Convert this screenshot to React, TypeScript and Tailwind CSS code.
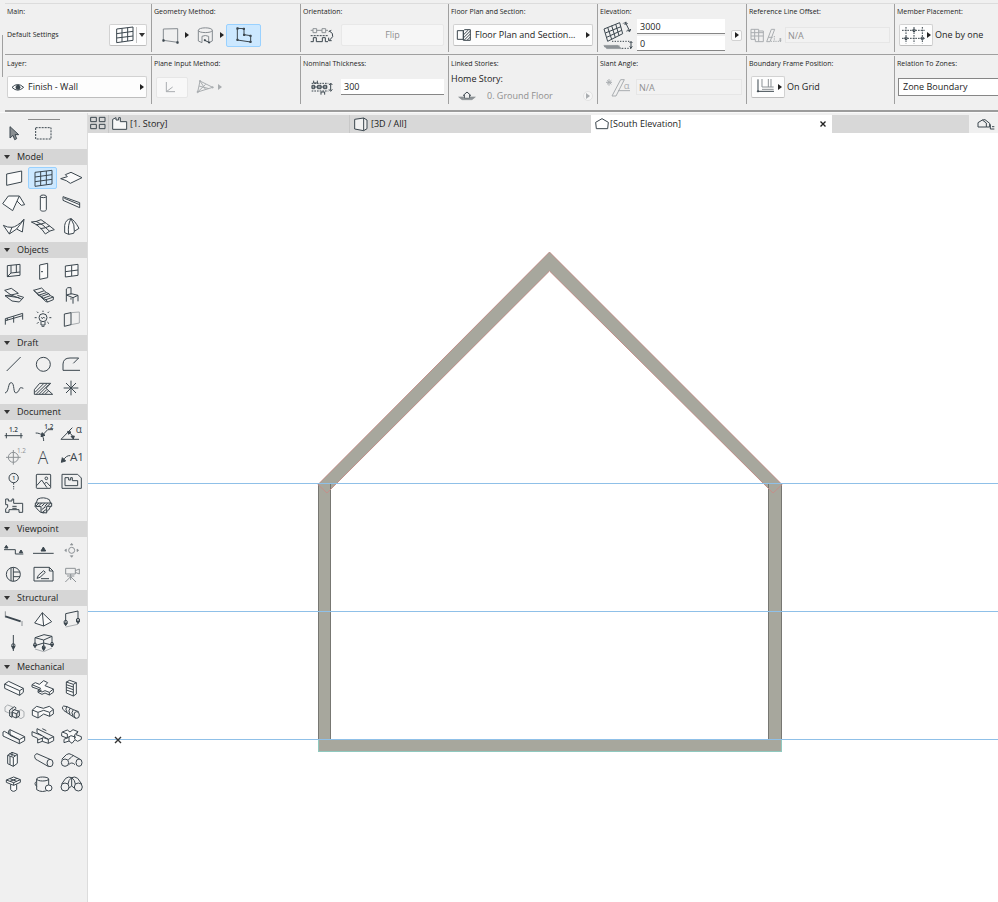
import type { ReactNode } from "react";
import clsx from "clsx";

const INK = "#3b464e";
const FAINT = "#a9adb0";

type GlyphProps = {
  box?: string;
  className?: string;
  color?: string;
  children: ReactNode;
};

// Icons are drawn on a grid three times finer than their size on screen.
function Glyph({ box = "0 0 72 60", className = "w-6 h-5", color = INK, children }: GlyphProps) {
  return (
    <svg
      viewBox={box}
      className={clsx("block shrink-0 overflow-visible", className)}
      fill="none"
      stroke={color}
      strokeWidth={3}
      strokeLinejoin="round"
      aria-hidden="true"
      fontFamily="Open Sans, sans-serif"
    >
      {children}
    </svg>
  );
}

function P({ d, c, w, fill }: { d: string; c?: string; w?: number; fill?: string }) {
  return <path d={d} stroke={c} strokeWidth={w} fill={fill} />;
}

type TxtProps = { x: number; y: number; size: number; c?: string; weight?: number; children: string };

function Txt({ x, y, size, c = INK, weight = 400, children }: TxtProps) {
  return (
    <text x={x} y={y} fontSize={size} fontWeight={weight} fill={c} stroke="none">
      {children}
    </text>
  );
}

function Caret({ color = "#222" }: { color?: string }) {
  return (
    <svg viewBox="0 0 4 6" className="block h-1.5 w-1 shrink-0" aria-hidden="true">
      <path d="M0 0L4 3L0 6Z" fill={color} />
    </svg>
  );
}

type Tool = { name: string; icon: ReactNode; color?: string; active?: boolean };

const sections: { title: string; tools: Tool[] }[] = [
  {
    title: "Model",
    tools: [
      { name: "Wall", icon: <P d="M14 18L59 9V42L14 52Z" fill="#fafafa" /> },
      {
        name: "Curtain Wall",
        active: true,
        icon: <P d="M12 13L63 7V48L12 55ZM29 11V53M46 9V50M12 27L63 20M12 41L63 34" />,
      },
      { name: "Slab", icon: <P d="M5 32L25 26L19 20L36 13L69 29L34 46L22 38Z" fill="#fafafa" /> },
      { name: "Roof", icon: <P d="M2 35L19 12H52L32 56ZM52 12L68 38L58 40L45 27" fill="#fafafa" /> },
      {
        name: "Column",
        icon: (
          <>
            <P d="M28 13V53C28 59 46 59 46 53V13" fill="#fafafa" />
            <ellipse cx="37" cy="13" rx="9" ry="4" />
          </>
        ),
      },
      { name: "Beam", icon: <P d="M12 14L62 32V47L12 25ZM16 19L62 38" fill="#fafafa" /> },
      { name: "Shell", icon: <P d="M4 28L22 54L44 39L61 48L66 10Q44 33 30 34T4 28M66 10L44 39M22 54L30 34" fill="#fafafa" /> },
      {
        name: "Mesh",
        icon: <P d="M1 18Q16 18 30 11Q44 20 70 41Q56 43 43 54Q26 28 1 18ZM15 16Q36 24 56 46M14 26Q30 26 43 20M28 38Q42 37 56 30" />,
      },
      {
        name: "Morph",
        icon: <P d="M17 50V28Q20 10 36 8Q46 12 60 37L46 46L44 52L29 55ZM36 8Q25 27 29 55M36 8Q48 26 46 46" fill="#fafafa" />,
      },
    ],
  },
  {
    title: "Objects",
    tools: [
      { name: "Window", icon: <P d="M16 14L54 10V43L16 47ZM27 13V36L54 33M16 47L27 36M43 12V34" /> },
      { name: "Door", icon: <P d="M26 12L50 7V50L26 55ZM30 32H36" fill="#fafafa" /> },
      { name: "Skylight", icon: <P d="M19 15L57 10V43L19 48ZM38 13V45M19 32L57 27" fill="#fafafa" /> },
      { name: "Ramp", icon: <P d="M8 16L28 10L49 25L27 30ZM27 30L9 32L30 48L52 51L65 37L46 31M27 30L60 43M9 32L52 38" /> },
      {
        name: "Stair",
        icon: <P d="M8 16L32 9L40 17L18 25ZM18 25L22 31L46 23L40 17M22 31L32 34L54 26L46 23M32 34L36 40L58 32L54 26M36 40L45 44L67 36L58 32M45 44L50 51L67 44V36M8 16L45 50L50 51" />,
      },
      { name: "Object", icon: <P d="M22 30V12Q24 6 36 8V29M22 30L37 26L57 31L42 38ZM22 30V50M42 38V56M57 31V49M36 38V44" /> },
      { name: "Railing", icon: <P d="M10 29L62 13V32M10 35L62 20M10 29V47M35 22V41M16 27V34" /> },
      {
        name: "Lamp",
        icon: (
          <>
            <circle cx="36" cy="26" r="12" />
            <P d="M30 38V48H42V38M32 52H40M31 25L34 29L38 24L41 28M36 5V9M18 8L22 12M54 8L50 12M11 26H17M55 26H61M18 44L23 39M54 44L49 39" />
          </>
        ),
      },
      {
        name: "Opening",
        icon: (
          <>
            <P d="M36 11L61 9V42L36 47" c={FAINT} />
            <P d="M16 15L36 11V47L16 52Z" />
          </>
        ),
      },
    ],
  },
  {
    title: "Draft",
    tools: [
      { name: "Line", icon: <P d="M14 51L56 9" /> },
      { name: "Circle", icon: <circle cx="37" cy="31" r="21" /> },
      { name: "Polyline", icon: <P d="M63 49H12V30Q13 12 33 12H59L43 28" /> },
      { name: "Spline", icon: <P d="M9 45C22 42 17 13 28 14S32 50 44 44S48 24 64 31" /> },
      {
        name: "Fill",
        icon: (
          <>
            <P d="M10 49V35L26 16H59L45 31L65 49Z" />
            <P d="M12 43L38 17M16 48L48 17M25 48L54 19M34 48L47 35M43 48L52 39" />
          </>
        ),
      },
      { name: "Hotspot", icon: <P d="M36 8V52M14 30H58M21 15L51 45M51 15L21 45" /> },
    ],
  },
  {
    title: "Document",
    tools: [
      {
        name: "Dimension",
        icon: (
          <>
            <P d="M8 38H62M13 30V46M57 30V46" />
            <Txt x={21} y={27} size={19} weight={600}>1.2</Txt>
          </>
        ),
      },
      {
        name: "Level Dimension",
        icon: (
          <>
            <P d="M14 30C30 30 38 38 38 54M34 37L50 20H66" />
            <P d="M30 41L33 29L42 37Z" fill={INK} />
            <Txt x={40} y={17} size={19} weight={600}>1.2</Txt>
          </>
        ),
      },
      {
        name: "Angle Dimension",
        icon: (
          <>
            <P d="M6 49H60M6 49L40 14M28 27Q41 34 43 46" />
            <P d="M26 25L36 27L29 34ZM43 48L36 40L46 39Z" fill={INK} />
            <Txt x={50} y={30} size={30}>α</Txt>
          </>
        ),
      },
      {
        name: "Elevation Dimension",
        color: "#8d9296",
        icon: (
          <>
            <circle cx="34" cy="31" r="15" />
            <P d="M12 31H56M34 9V53" />
            <Txt x={45} y={17} size={19} c="#8d9296">1.2</Txt>
          </>
        ),
      },
      { name: "Text", icon: <Txt x={20} y={50} size={52} weight={300}>A</Txt> },
      {
        name: "Label",
        icon: (
          <>
            <P d="M34 26Q22 24 12 41" />
            <P d="M7 46L10 32L20 42Z" fill={INK} />
            <Txt x={33} y={43} size={35}>A1</Txt>
          </>
        ),
      },
      {
        name: "Grid Element",
        icon: (
          <>
            <circle cx="35" cy="21" r="14" />
            <P d="M35 35V41M35 45V49M35 52V55" />
            <Txt x={30} y={28} size={18} weight={600}>1</Txt>
          </>
        ),
      },
      {
        name: "Figure",
        icon: (
          <>
            <rect x="16" y="10" width="43" height="42" rx="2" />
            <circle cx="46" cy="22" r="4" />
            <P d="M17 44L32 27L48 50M40 39L46 33L58 46" />
          </>
        ),
      },
      { name: "Drawing", icon: <P d="M9 10H56L67 21V52H9ZM18 20H29V27H35V20H40V29H56V44H18Z" /> },
      { name: "Zone", icon: <P d="M11 12H19V18H30V12H35V25H62V52H51V44H21V52H11V42L17 36V29H11ZM31 34H44M31 40H44" /> },
      {
        name: "Detail",
        icon: (
          <>
            <P d="M20 12Q38 4 55 14L61 30L53 45Q36 62 22 46L12 34Z" />
            <P d="M13 34V24H62V34H47V54L30 52V35Z" fill="#e8e8e8" />
            <P d="M15 33L24 24M23 33L32 24M32 34L41 25M41 34L50 25M50 33L59 24M32 44L44 35M34 52L46 43" />
          </>
        ),
      },
    ],
  },
  {
    title: "Viewpoint",
    tools: [
      {
        name: "Section",
        icon: (
          <>
            <P d="M6 29H40V42H64" />
            <P d="M8 24L13 16L18 24ZM52 38L57 30L62 38Z" fill={INK} />
          </>
        ),
      },
      {
        name: "Elevation",
        icon: (
          <>
            <P d="M6 40H68" />
            <P d="M30 33L37 21L44 33Z" fill={INK} />
          </>
        ),
      },
      {
        name: "Interior Elevation",
        color: "#8d9296",
        icon: (
          <>
            <circle cx="38" cy="31" r="9" />
            <P d="M38 10L42 15H34ZM38 52L42 47H34ZM17 31L22 27V35ZM59 31L54 27V35Z" fill="#8d9296" w={2} />
          </>
        ),
      },
      {
        name: "Worksheet",
        icon: (
          <>
            <circle cx="34" cy="31" r="21" />
            <P d="M27 11V51M34 10V52M34 24H54M34 38H54" />
          </>
        ),
      },
      { name: "Change", icon: <P d="M9 10H55L66 21V51H9ZM55 10V21H66M18 43L22 34L38 20L43 25L27 40ZM30 44H54" /> },
      {
        name: "Camera",
        color: "#8d9296",
        icon: <P d="M20 13H49V30H20ZM49 20L61 15V30L49 25M35 30V38M35 38L19 54M35 38L51 54M35 38V48M24 36H46" />,
      },
    ],
  },
  {
    title: "Structural",
    tools: [
      {
        name: "Edge Support",
        icon: (
          <>
            <P d="M10 7V25M60 36V51" c="#8d9296" />
            <P d="M10 22L56 37" w={6} />
          </>
        ),
      },
      { name: "Surface Support", icon: <P d="M34 11L11 42L38 51L62 38ZM34 11L38 51" fill="#fafafa" /> },
      {
        name: "Edge Load",
        icon: (
          <>
            <P d="M20 38V14L57 6V32" />
            <P d="M20 54L57 46" c={FAINT} />
            <circle cx="20" cy="39" r="5" />
            <circle cx="57" cy="33" r="5" />
            <P d="M15 42H25L20 50ZM52 36H62L57 44Z" fill={INK} />
          </>
        ),
      },
      {
        name: "Point Load",
        icon: (
          <>
            <P d="M34 6V54" />
            <circle cx="34" cy="37" r="5" />
            <P d="M29 40H39L34 49Z" fill={INK} />
          </>
        ),
      },
      {
        name: "Surface Load",
        icon: (
          <>
            <P d="M12 14L39 5L63 10L38 21ZM12 14V33M38 21V42M63 10V32M12 38L38 30L63 36" />
            <P d="M12 48L38 56L63 45" c={FAINT} />
            <circle cx="12" cy="34" r="4" />
            <circle cx="38" cy="42" r="4" />
            <circle cx="63" cy="32" r="4" />
            <P d="M7 36H17L12 44ZM33 44H43L38 53ZM58 34H68L63 42Z" fill={INK} />
          </>
        ),
      },
    ],
  },
  {
    title: "Mechanical",
    tools: [
      { name: "Duct", icon: <P d="M8 18L20 10L64 31V43L53 52L8 31ZM8 18L53 38V52M53 38L64 31" fill="#fafafa" /> },
      {
        name: "Duct Junction",
        icon: <P d="M3 20L13 14L25 19L38 8L50 14L42 23L67 33V43L55 51L42 45L33 49L21 43L31 37L3 27ZM3 20L29 31L21 37V43M21 37L33 42L42 38L55 43V51M55 43L67 33" fill="#fafafa" />,
      },
      { name: "Air Terminal", icon: <P d="M22 12L32 7L52 14V48L43 54L22 45ZM22 12L43 19V54M43 19L52 14M22 20L43 27M22 28L43 35M22 36L43 43" fill="#fafafa" /> },
      {
        name: "Equipment",
        icon: (
          <>
            <P d="M9 15L17 9L31 14V29L23 34L9 28ZM47 27L57 23L66 29V44L57 50L46 44Z" c={FAINT} />
            <P d="M23 42V24L37 14L42 18M23 42L30 46V29L43 19M35 22L52 28V42L42 48L31 43V31L43 35V48M43 35L52 28" />
          </>
        ),
      },
      { name: "Bend", icon: <P d="M4 24L17 13L37 19L55 13L67 22V36L56 43L38 36L21 48L4 40ZM4 24L21 31V48M21 31L38 25L56 31V43M56 31L67 22" fill="#fafafa" /> },
      {
        name: "Flexible Duct",
        icon: (
          <>
            <P d="M14 12Q6 16 15 26L50 49M14 12L24 14L43 23L59 29M24 14Q17 20 24 31M34 18Q26 25 33 37M43 23Q35 31 42 43" />
            <ellipse cx="53" cy="39" rx="8" ry="10" />
          </>
        ),
      },
      { name: "Cable Carrier", icon: <P d="M3 18V30L52 53L68 44V32L52 41L24 28M3 18L7 16L52 41V53M24 28V11L68 32M24 11L20 14V25" fill="#fafafa" /> },
      { name: "Cable Junction", icon: <P d="M3 17V29L20 37V51L34 46L52 52L68 44V32L52 40L38 35L20 42M3 17L33 29M18 8V20L52 40V52M18 8L68 32M34 8L46 14M34 35V46" fill="#fafafa" /> },
      { name: "Cable Cross", icon: <P d="M10 18L25 12L33 18L42 11L57 17L51 26L67 32V40L56 46L48 41L39 52L30 45L15 50V40L24 36L8 30V22ZM10 18L25 24V37M57 17L47 26V40M24 36L36 29L51 34M30 45V32" fill="#fafafa" /> },
      { name: "Inline Fitting", icon: <P d="M17 16L30 7L46 13V40L34 49L17 41ZM17 16L34 22V49M34 22L46 13M24 19V44M30 7V18M22 11L40 17" fill="#fafafa" /> },
      {
        name: "Pipe",
        icon: (
          <>
            <P d="M18 11Q8 14 12 24Q13 29 20 31L53 50M18 11L57 28" />
            <ellipse cx="57" cy="39" rx="9" ry="11" />
          </>
        ),
      },
      {
        name: "Pipe Junction",
        icon: (
          <>
            <P d="M8 28L22 14Q30 8 38 14L62 27M29 44Q38 34 48 44M28 29Q38 22 44 15" />
            <circle cx="18" cy="38" r="11" />
            <ellipse cx="60" cy="38" rx="9" ry="11" />
          </>
        ),
      },
      {
        name: "Pipe Terminal",
        icon: <P d="M13 18L35 9L55 17V25L35 34L13 25ZM13 18L35 26L55 17M35 26V34M26 31V47Q34 57 44 47V31M24 14L44 22M24 22L46 13" fill="#fafafa" />,
      },
      {
        name: "Tank",
        icon: (
          <>
            <P d="M17 15V47Q34 58 53 47V15M17 22Q7 28 17 37" />
            <ellipse cx="35" cy="15" rx="18" ry="6" />
            <ellipse cx="53" cy="42" rx="10" ry="9" fill="#fafafa" />
          </>
        ),
      },
      {
        name: "Pipe Bend",
        icon: (
          <>
            <P d="M8 30L20 13Q29 6 38 11Q47 6 56 13L68 30M38 11V36M29 43L38 36L47 43M27 30Q28 18 38 11Q48 18 49 30" />
            <circle cx="18" cy="39" r="12" />
            <circle cx="58" cy="39" r="12" />
          </>
        ),
      },
    ],
  },
];

function Toolbox() {
  return (
    <aside aria-label="Toolbox" className="w-[88px] shrink-0 border-r border-[#dcdcdc] bg-[#f0f0f0]">
      <div className="flex flex-col items-center pt-1.5">
        <div className="h-px w-8 bg-[#8c8c8c]" />
      </div>
      <div className="mb-[3px] grid h-[26px] grid-cols-[28px_29px_28px] place-items-center">
        <button aria-label="Arrow">
          <Glyph>
            <P d="M24 11V45L33 37L38 50L44 47L39 35H50Z" fill="#8a8f92" />
          </Glyph>
        </button>
        <button aria-label="Marquee">
          <Glyph>
            <rect x="14" y="14" width="46" height="34" strokeDasharray="6 3" />
          </Glyph>
        </button>
      </div>
      {sections.map((section) => (
        <section key={section.title}>
          <h2>
            <button className="flex h-4 w-full items-center bg-[#d6d6d6] pl-1 text-[9px] leading-4 font-medium">
              <svg viewBox="0 0 6 4" className="mr-[7px] h-1 w-1.5" aria-hidden="true">
                <path d="M0 0H6L3 4Z" fill="#333" />
              </svg>
              {section.title}
            </button>
          </h2>
          <div className="grid grid-cols-[28px_29px_28px] pt-px pb-1">
            {section.tools.map((tool) => (
              <button
                key={tool.name}
                aria-label={tool.name}
                className={clsx(
                  "my-px flex h-[22px] items-center justify-center rounded-xs border",
                  tool.active ? "border-[#99d1ff] bg-[#cce8ff]" : "border-transparent",
                )}
              >
                <Glyph color={tool.color}>{tool.icon}</Glyph>
              </button>
            ))}
          </div>
        </section>
      ))}
    </aside>
  );
}

const raised = "flex items-center rounded-xs border border-[#d2d2d2] border-b-[#bdbdbd] bg-[#fdfdfd]";
const field = "h-4 min-w-0 border-b border-[#868686] bg-white px-[3px] text-[9px]";
const disabledField = "h-4 min-w-0 border border-[#e6e6e6] bg-[#f2f2f2] px-0.5 text-[9px] text-[#8f8f8f]";

function Cell({ label, htmlFor, first, children }: { label: string; htmlFor?: string; first?: boolean; children: ReactNode }) {
  return (
    <div className={clsx("flex h-12 min-w-0 flex-col pl-0.5", !first && "border-l border-[#a0a0a0]")}>
      <label htmlFor={htmlFor} className="h-3.5 pt-px text-[7px] leading-[14px] whitespace-nowrap">
        {label}
      </label>
      <div className="flex flex-1 items-center">{children}</div>
    </div>
  );
}

function InfoBox() {
  const cols = "grid grid-cols-[146px_149px_148px_149px_149px_148px_minmax(0,1fr)]";
  return (
    <header className="flex items-center overflow-hidden border-b border-[#fafafa] bg-[#f0f0f0]">
      <div className="ml-0.5 h-[42px] w-px bg-[#a0a0a0]" />
      <div className="ml-0.5 min-w-0 flex-1 border-b-2 border-[#9c9c9c] pt-[3px] pb-1.5">
        <div className={clsx(cols, "border-t border-[#dcdcdc] pb-0.5")}>
          <Cell label="Main:" first>
            <span className="text-[7px]">Default Settings</span>
            <button aria-label="Default settings" className={clsx(raised, "mr-1 ml-auto h-[22px] w-[38px]")}>
              <Glyph box="340 74 60 60" className="ml-1 h-5 w-5">
                <P d="M348 86L397 80V120L348 127ZM364 84V125M381 82V122M348 100L397 93M348 113L397 107" />
              </Glyph>
              <span className="ml-0.5 h-4 w-px bg-[#c4c4c4]" />
              <svg viewBox="0 0 6 4" className="ml-0.5 h-1 w-1.5" aria-hidden="true">
                <path d="M0 0H6L3 4Z" fill="#333" />
              </svg>
            </button>
          </Cell>
          <Cell label="Geometry Method:">
            <button aria-label="Rectangular" className="ml-1.5 flex items-center gap-[3px]">
              <Glyph box="480 72 66 60" className="h-5 w-[22px]" color="#858b90">
                <P d="M490 118V84L533 83V124Z" />
                <P d="M489 117H492V120H489ZM531 123H534V126H531Z" fill={INK} c={INK} w={4} />
              </Glyph>
              <Caret />
            </button>
            <button aria-label="Cylindrical" className="ml-1.5 flex items-center gap-[3px]">
              <Glyph box="585 72 66 60" className="h-5 w-[22px]" color="#858b90">
                <P d="M595 88C595 78 637 78 637 88V120L626 125V106Q616 101 606 106V125L595 120ZM595 88C595 97 637 97 637 88" />
                <P d="M614 118L627 124" c={INK} />
                <P d="M613 116H616V119H613ZM626 123H629V126H626Z" fill={INK} c={INK} />
              </Glyph>
              <Caret />
            </button>
            <button aria-label="Polygonal" className="ml-0.5 flex h-[23px] w-[35px] items-center justify-center rounded-xs border border-[#99d1ff] bg-[#cce8ff]">
              <Glyph box="692 74 66 60" className="h-5 w-[22px]">
                <P d="M705 84L725 85V103L745 106V125L705 119Z" />
                <P d="M704 83H707V86H704ZM723 84H726V87H723ZM724 102H727V105H724ZM743 105H746V108H743ZM743 123H746V126H743ZM704 117H707V120H704Z" fill={INK} w={4} />
              </Glyph>
            </button>
          </Cell>
          <Cell label="Orientation:">
            <Glyph box="25 72 78 60" className="ml-1.5 h-5 w-[26px]">
              <P d="M30 88H37M48 88H64M75 88H82" c="#8d9296" />
              <path d="M30 104H82" strokeDasharray="6 3" />
              <P d="M37 83H48V95H37ZM64 83H75V95H64Z" c="#8d9296" />
              <P d="M30 122H38V110H47V122H65V110H74V122H82" />
              <P d="M86 90Q99 96 96 107L87 117M84 92L92 88M84 110V119H93" />
            </Glyph>
            <button disabled className="mr-1 ml-1.5 h-[22px] flex-1 rounded-xs border border-[#e8e8e8] bg-[#f6f6f6] text-[9px] text-[#8f8f8f]">
              Flip
            </button>
          </Cell>
          <Cell label="Floor Plan and Section:">
            <button className={clsx(raised, "mr-1 ml-0.5 h-[22px] flex-1 text-[9px] font-medium whitespace-nowrap")}>
              <Glyph box="468 80 54 48" className="mr-0.5 ml-px h-4 w-[18px]">
                <P d="M475 91H493V117H475Z" />
                <P d="M493 91L497 88H514V120H493Z" />
                <P d="M494 103L508 89M494 112L514 92M496 119L514 101M505 119L514 110" />
              </Glyph>
              Floor Plan and Section...
              <span className="mr-0.5 ml-auto">
                <Caret />
              </span>
            </button>
          </Cell>
          <Cell label="Elevation:" htmlFor="elevation">
            <Glyph box="22 58 93 93" className="ml-0.5 h-[31px] w-[31px]">
              <P d="M28 85L75 66L84 99L39 122ZM39 80L51 116M51 75L62 111M63 70L73 105M32 97L79 78M36 110L81 89" />
              <P d="M84 69L95 64M94 92L108 87M28 138L75 136" c="#8d9296" />
              <P d="M93 67L105 91M91 73L92 65L99 69M98 88L105 93L108 85" />
              <path d="M52 122H108M82 143H110" strokeDasharray="4 4" />
              <P d="M109 124V140M105 127L109 122L113 127M105 137L109 142L113 137" />
              <P d="M27 134H69L82 144H36Z" fill="#8d9296" c="#8d9296" w={1} />
            </Glyph>
            <div className="ml-1 flex w-[88px] flex-col gap-0.5">
              <input id="elevation" defaultValue="3000" className={clsx(field, "h-[15px]")} />
              <input aria-label="Elevation to project zero" defaultValue="0" className={clsx(field, "h-[15px]")} />
            </div>
            <button aria-label="More elevation options" className="ml-1.5 flex h-[11px] w-[11px] items-center justify-center rounded-xs border border-[#d2d2d2] bg-[#fdfdfd]">
              <Caret />
            </button>
          </Cell>
          <Cell label="Reference Line Offset:" htmlFor="offset">
            <Glyph box="464 76 108 54" className="h-[18px] w-9" color={FAINT}>
              <P d="M470 86H493V91H507V123H483V116H470ZM481 86V116M493 91V123M470 96H507M470 106H507" />
              <P d="M517 123L531 86H541L527 123ZM522 110H535" />
              <path d="M529 122H560M540 106V122" strokeDasharray="4 3" />
              <P d="M558 112V123M555 115H561M555 120H561" />
            </Glyph>
            <input id="offset" disabled defaultValue="N/A" className={clsx(disabledField, "mr-1 flex-1")} />
          </Cell>
          <Cell label="Member Placement:">
            <button aria-label="Member placement" className={clsx(raised, "ml-0.5 h-[22px] w-[34px] justify-center")}>
              <Glyph box="918 78 78 54" className="h-[18px] w-[26px]">
                <path d="M921 91H989M921 115H989M933 81V130M957 81V130M982 81V130" strokeDasharray="5 3" />
                <circle cx="957" cy="91" r="4" />
                <circle cx="933" cy="115" r="4" />
                <circle cx="982" cy="115" r="4" />
              </Glyph>
              <Caret />
            </button>
            <span className="ml-0.5 text-[9px] font-medium whitespace-nowrap">One by one</span>
          </Cell>
        </div>
        <div className={clsx(cols, "border-t border-[#a0a0a0] pt-px")}>
          <Cell label="Layer:" first>
            <button className={clsx(raised, "mr-1 h-[22px] flex-1 text-[9px] font-medium")}>
              <Glyph box="32 244 45 33" className="mr-0.5 ml-[3px] h-[11px] w-[15px]">
                <P d="M35 260Q52 243 70 260Q52 277 35 260Z" />
                <circle cx="53" cy="260" r="6" fill={INK} />
              </Glyph>
              Finish - Wall
              <span className="mr-0.5 ml-auto">
                <Caret />
              </span>
            </button>
          </Cell>
          <Cell label="Plane Input Method:">
            <button aria-label="Plane by angle" disabled className="ml-0.5 flex h-[21px] w-8 items-center justify-center rounded-xs border border-[#e6e6e6] bg-[#f8f8f8]">
              <Glyph box="486 238 60 48" className="h-4 w-5" color={FAINT}>
                <P d="M499 247V276H525M499 276L518 262" />
              </Glyph>
            </button>
            <button aria-label="Plane by points" disabled className="ml-1.5 flex items-center gap-0.5">
              <Glyph box="585 234 66 54" className="h-[18px] w-[22px]" color={FAINT}>
                <P d="M603 243L596 276L641 262ZM603 243L620 269M596 276L620 253M600 258L630 266" />
                <circle cx="603" cy="243" r="2" />
                <circle cx="596" cy="276" r="2" />
                <circle cx="641" cy="262" r="2" />
              </Glyph>
              <Caret color={FAINT} />
            </button>
          </Cell>
          <Cell label="Nominal Thickness:" htmlFor="thickness">
            <Glyph box="28 234 78 54" className="ml-1.5 h-[18px] w-[26px]">
              <path d="M36 250H86M36 273H86" strokeDasharray="5 3" />
              <P d="M42 242V249H53V242M64 284V276H75V284M36 261H83M37 256H45V266H37ZM54 256H64V266H54ZM72 256H81V266H72Z" />
              <P d="M93 252V271M88 255L93 249L98 255M88 268L93 274L98 268" />
            </Glyph>
            <input id="thickness" defaultValue="300" className={clsx(field, "mr-1 ml-1.5 flex-1")} />
          </Cell>
          <Cell label="Linked Stories:">
            <div className="flex flex-1 flex-col text-[9px]">
              <span className="h-4 leading-[18px] font-medium">Home Story:</span>
              <span className="flex h-[18px] items-center pt-px text-[#8f8f8f]">
                <Glyph box="475 270 66 36" className="ml-1.5 h-3 w-[22px]">
                  <P d="M493 287L505 276L517 287M497 285V295H513V285" />
                  <P d="M480 291H495V296H514V291H530L520 299H490Z" fill="#8d9296" c="#8d9296" w={2} />
                </Glyph>
                <span className="ml-2">0. Ground Floor</span>
                <button aria-label="Choose home story" disabled className="mr-1 ml-auto flex h-2.5 w-2.5 items-center justify-center rounded-full border border-[#e2e2e2] bg-[#f6f6f6]">
                  <Caret color={FAINT} />
                </button>
              </span>
            </div>
          </Cell>
          <Cell label="Slant Angle:" htmlFor="slant">
            <Glyph box="28 232 90 60" className="ml-1 h-5 w-[30px]" color={FAINT}>
              <P d="M43 238V258M34 248H52M37 242L50 254M50 242L37 254" />
              <P d="M52 289L78 240H89L64 289ZM70 273H106" />
              <Txt x={87} y={267} size={28} c={FAINT}>α</Txt>
            </Glyph>
            <input id="slant" disabled defaultValue="N/A" className={clsx(disabledField, "mr-1 ml-0.5 flex-1")} />
          </Cell>
          <Cell label="Boundary Frame Position:">
            <button aria-label="Boundary frame position" className={clsx(raised, "ml-0.5 h-[22px] w-[34px] justify-center")}>
              <Glyph box="476 234 66 54" className="mr-0.5 h-[18px] w-[22px]" color="#8d9296">
                <P d="M500 237V261H535M519 237V261M527 237V261M500 268H535" />
                <P d="M488 238V274H536" c={INK} />
                <circle cx="488" cy="274" r="2" fill={INK} stroke={INK} />
              </Glyph>
              <Caret />
            </button>
            <span className="ml-0.5 text-[9px] font-medium whitespace-nowrap">On Grid</span>
          </Cell>
          <Cell label="Relation To Zones:" htmlFor="zones">
            <select id="zones" className="ml-px h-[18px] w-[120px] shrink-0 appearance-none border border-[#868686] bg-white px-1 text-[9px] font-medium">
              <option>Zone Boundary</option>
            </select>
          </Cell>
        </div>
      </div>
    </header>
  );
}

function TabBar() {
  const tab = "flex h-[18px] w-[241px] shrink items-center gap-0.5 text-[9px] leading-[18px] whitespace-nowrap";
  return (
    <nav aria-label="Views" className="mt-0.5 flex h-[18px] bg-[#d8d8d8]">
      <button aria-label="Tab overview" className="flex w-[21px] items-center justify-center border-r border-[#c8c8c8]">
        <Glyph box="270 20 54 48" className="h-4 w-[18px]">
          <P d="M275 24H292V37H275ZM301 24H318V37H301ZM275 45H292V58H275ZM301 45H318V58H301Z" />
        </Glyph>
      </button>
      <button className={clsx(tab, "border-r border-[#c8c8c8] pl-0.5")}>
        <Glyph box="333 18 51 48" className="h-4 w-[17px]">
          <P d="M338 28L348 23V30H356V23H361V35H380V58H338Z" fill="#f7f7f7" />
        </Glyph>
        [1. Story]
      </button>
      <button className={clsx(tab, "pl-[3px]")}>
        <Glyph box="38 18 48 48" className="h-4 w-4">
          <P d="M43 28L70 24V62L43 57ZM70 24L80 30V56L70 62" fill="#f2f2f2" />
        </Glyph>
        [3D / All]
      </button>
      <div className={clsx(tab, "bg-white pr-1.5 pl-[3px]")}>
        <button className="flex flex-1 items-center">
          <Glyph box="762 18 48 48" className="h-4 w-4">
            <P d="M767 37L786 26L805 37L803 56H769Z" fill="#fff" />
          </Glyph>
          [South Elevation]
        </button>
        <button aria-label="Close tab">
          <svg viewBox="0 0 6 6" className="h-1.5 w-1.5" stroke="#222" strokeWidth={1.4}>
            <path d="M0.5 0.5L5.5 5.5M5.5 0.5L0.5 5.5" />
          </svg>
        </button>
      </div>
      <button aria-label="Navigator" className="ml-auto flex w-[29px] shrink-0 items-center justify-center bg-[#f0f0f0] pl-1">
        <Glyph box="1144 352 54 42" className="h-3.5 w-[18px]">
          <P d="M1147 382V369L1160 361L1172 370V382ZM1160 361L1168 360L1182 371V382H1172" />
          <P d="M1184 374V388H1196M1189 381H1196" />
        </Glyph>
      </button>
    </nav>
  );
}

function ElevationView() {
  return (
    <svg role="img" aria-label="South elevation" className="block h-[769px] w-full grow bg-white">
      <g transform="translate(-88 -133)" shapeRendering="crispEdges">
        <rect x="318" y="484" width="13" height="255" fill="#a7a79d" />
        <rect x="768" y="484" width="14" height="255" fill="#a7a79d" />
        <path d="M318 484.5L549.5 252L782 484.5L773 493L549.5 271L327 493Z" fill="#a7a79d" />
        <rect x="318" y="739" width="464" height="13" fill="#a7a79d" />
        <path d="M318.5 484V739M330.5 484V739M768.5 484V739M781.5 484V739" stroke="#777772" fill="none" />
        <path d="M318.5 739V751.5H781.5V739" stroke="#8fc9bf" fill="none" />
        <path
          d="M318 484.5L549.5 252L782 484.5L773 493L549.5 271L327 493Z"
          fill="none"
          stroke="#c4908b"
          shapeRendering="auto"
        />
        <path d="M88 483.5H9999M88 611.5H9999M88 739.5H9999" stroke="#8fc0e8" />
        <path d="M115 737L121 743M121 737L115 743" stroke="#333" strokeWidth={1.4} shapeRendering="auto" />
      </g>
    </svg>
  );
}

export default function App() {
  return (
    <div className="flex min-h-screen flex-col bg-[#f0f0f0] font-['Open_Sans','Noto_Sans',sans-serif] text-[#1c1c1c]">
      <InfoBox />
      <div className="flex flex-1">
        <Toolbox />
        <main className="flex min-w-0 flex-1 flex-col">
          <TabBar />
          <ElevationView />
        </main>
      </div>
    </div>
  );
}
